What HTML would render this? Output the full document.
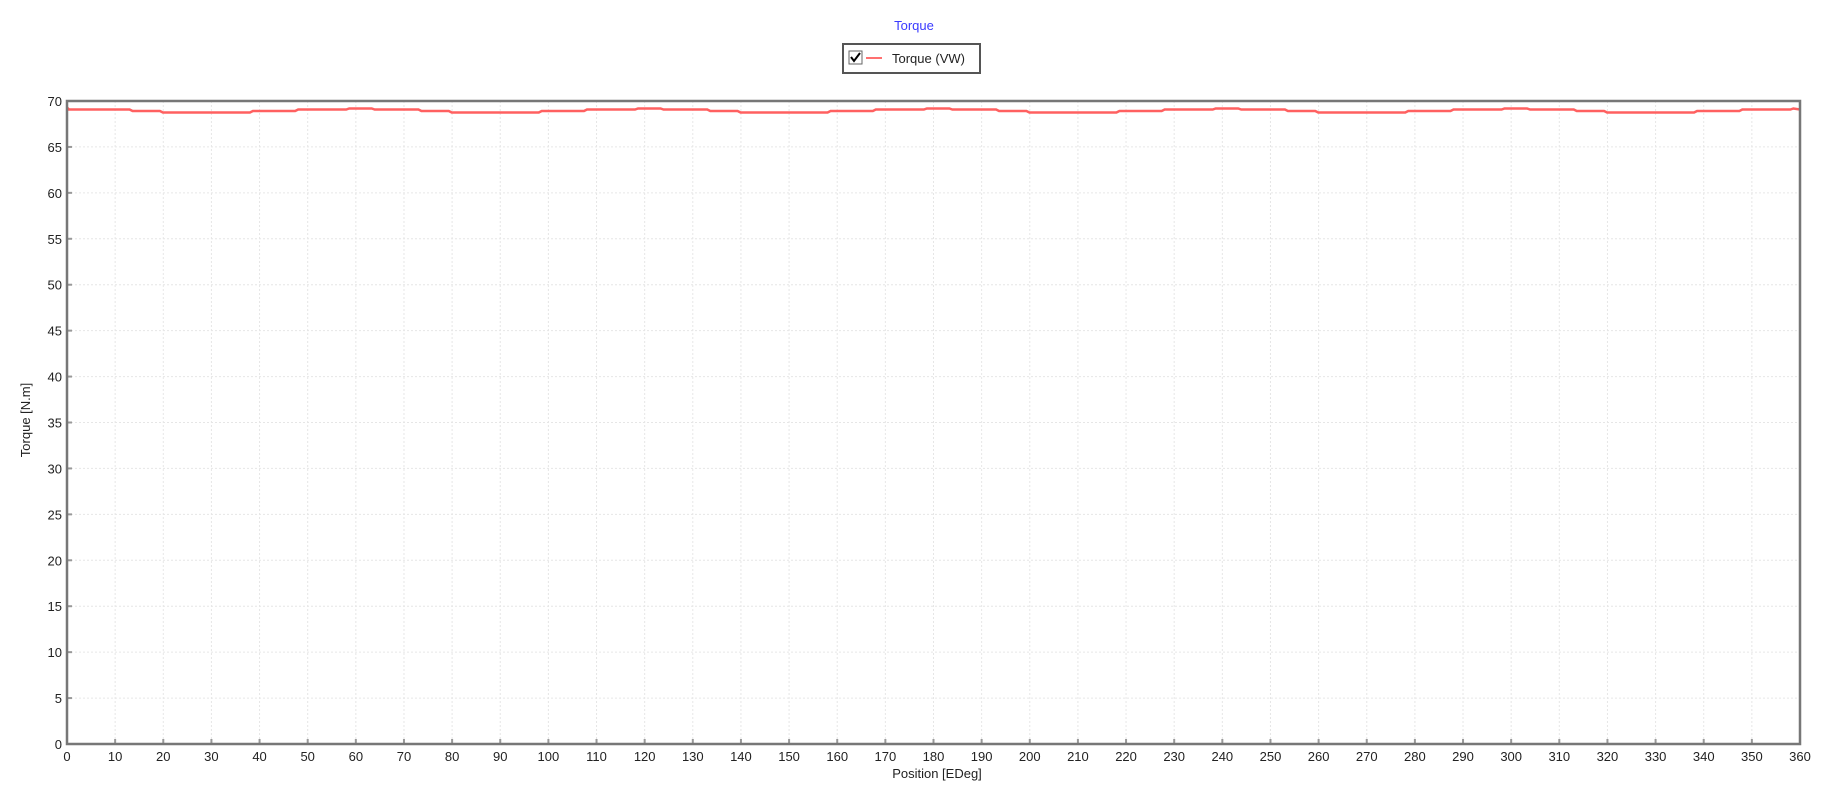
<!DOCTYPE html>
<html><head><meta charset="utf-8"><style>
html,body{margin:0;padding:0;background:#fff;width:1830px;height:798px;overflow:hidden}
svg text{font-family:"Liberation Sans",Arial,sans-serif;font-size:13px;fill:#222}
</style></head><body>
<svg id="s" width="1830" height="798" xmlns="http://www.w3.org/2000/svg">
<text x="914" y="30" text-anchor="middle" style="fill:#3a3aff">Torque</text>
<rect x="843" y="44" width="137" height="29" fill="#fff" stroke="#555" stroke-width="2"/>
<rect x="849" y="51" width="13" height="13" fill="#fff" stroke="#666"/>
<path d="M851 57 l3 4 l6 -8" stroke="#000" stroke-width="2" fill="none"/>
<line x1="866" y1="58" x2="882" y2="58" stroke="#ff7070" stroke-width="2"/>
<text x="892" y="63">Torque (VW)</text>
<g id="grid"></g>
<text transform="translate(30,420) rotate(-90)" text-anchor="middle">Torque [N.m]</text>
<text x="937" y="778" text-anchor="middle">Position [EDeg]</text>
</svg>
<script>
var g=document.getElementById('grid'),h='';
var L=67,R=1800,T=101,B=744;
function X(d){return L+(R-L)*d/360}
function Y(v){return B-(B-T)*v/70}
for(var d=0;d<=360;d+=10){var x=X(d);
 if(d>0&&d<360)h+='<line x1="'+x+'" y1="'+T+'" x2="'+x+'" y2="'+B+'" stroke="#e6e6e6" stroke-dasharray="2,2"/>';
 h+='<line x1="'+x+'" y1="'+(B-5)+'" x2="'+x+'" y2="'+B+'" stroke="#999" stroke-width="2"/>';
 h+='<text x="'+x+'" y="'+(B+17)+'" text-anchor="middle">'+d+'</text>';}
for(var v=0;v<=70;v+=5){var y=Y(v);
 if(v>0&&v<70)h+='<line x1="'+L+'" y1="'+y+'" x2="'+R+'" y2="'+y+'" stroke="#e6e6e6" stroke-dasharray="2,2"/>';
 h+='<line x1="'+L+'" y1="'+y+'" x2="'+(L+5)+'" y2="'+y+'" stroke="#999" stroke-width="2"/>';
 h+='<text x="62" y="'+(y+5)+'" text-anchor="end">'+v+'</text>';}
var seg=[[0,109.5],[13,111],[19.3,112.5],[38,111],[47.4,109.5],[58,108.5],[63.3,109.5]];
var p='M'+L+' 107.5 L'+(L+2)+' 109.5';
for(var k=0;k<6;k++){for(var i=0;i<seg.length;i++){var d0=seg[i][0]+60*k;if(i==0&&k>0)continue;if(d0>360)break;
 var prevy=i==0?109.5:seg[i-1][1];p+=' L'+X(d0)+' '+prevy+' L'+(X(d0)+3)+' '+seg[i][1];}}
p+=' L'+R+' 109.5';
h+='<path d="'+p+'" stroke="#ff6060" stroke-width="2.5" fill="none"/>';
h+='<path d="M'+L+' '+T+' L'+R+' '+T+' L'+R+' '+B+' L'+L+' '+B+' Z" stroke="#777" stroke-width="2.5" fill="none"/>';
g.innerHTML=h;
</script>
</body></html>
